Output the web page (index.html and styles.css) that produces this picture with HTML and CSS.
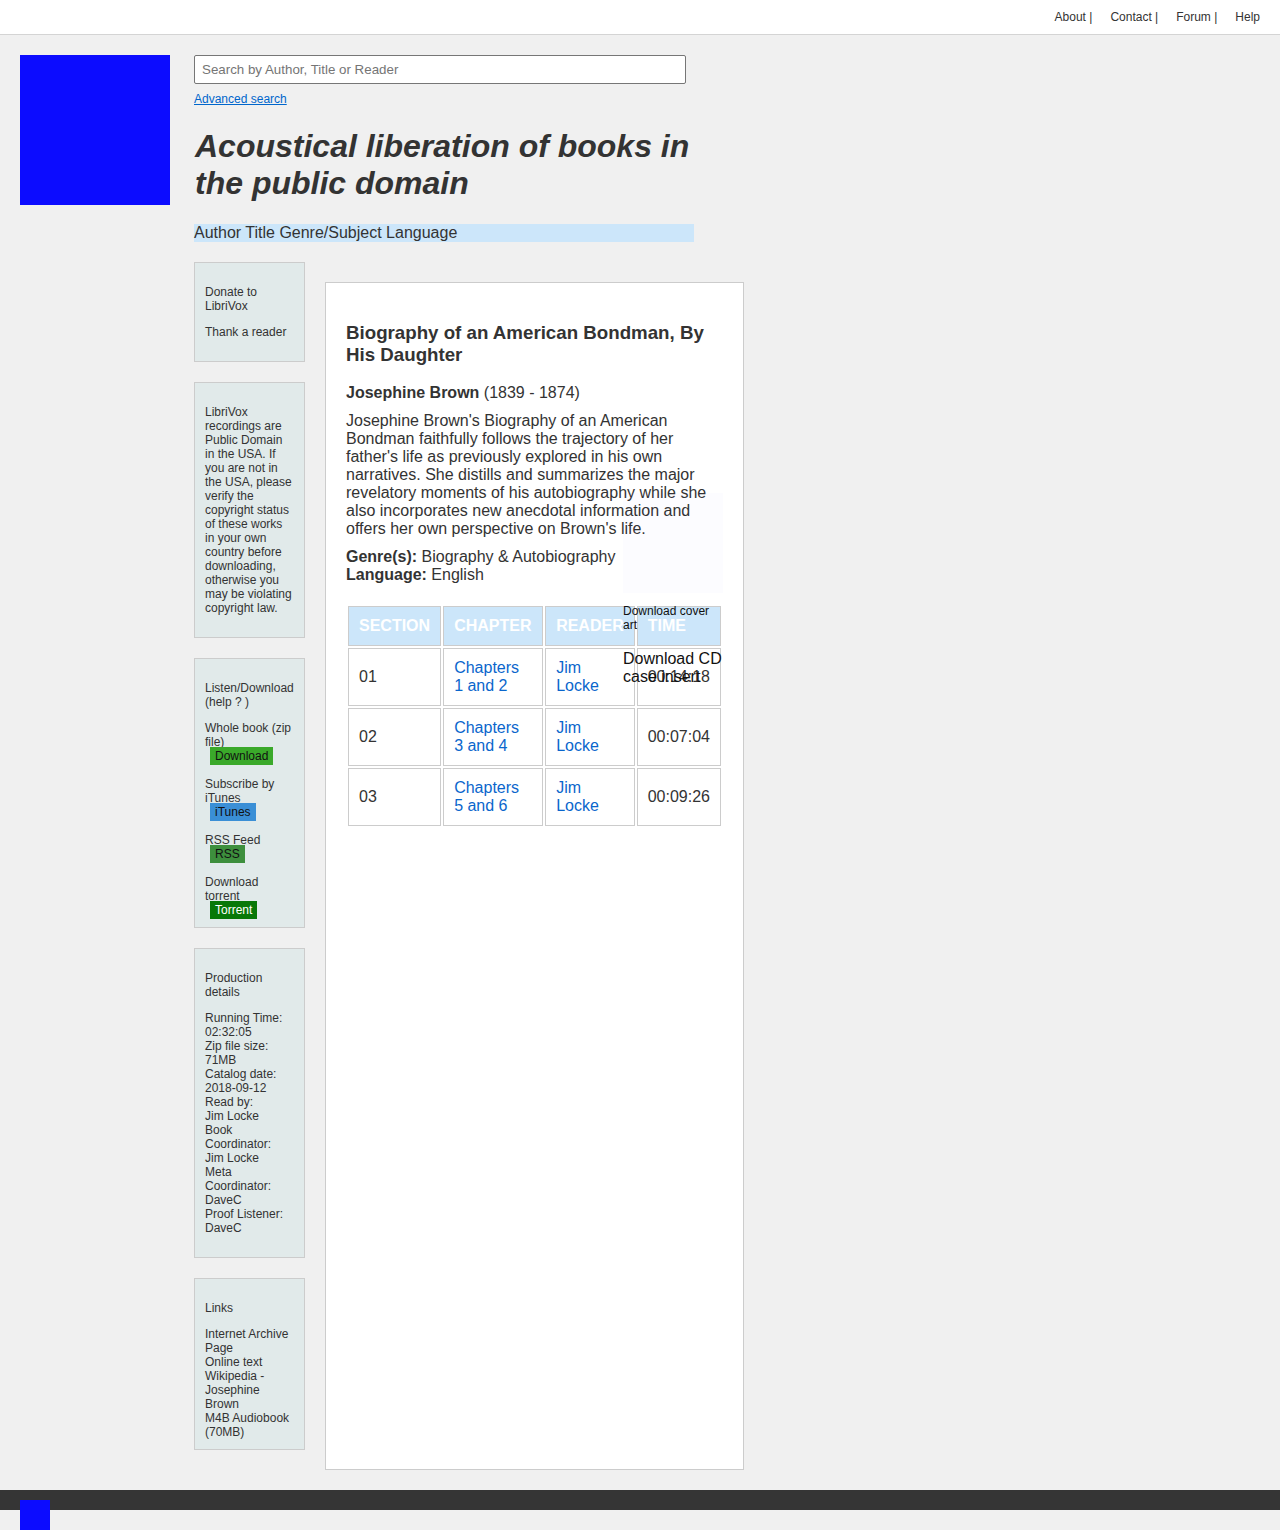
FILE: index.html
```html
<!DOCTYPE html>
<html lang="en">
<head>
<meta charset="utf-8">
<title>Biography of an American Bondman, By His Daughter - LibriVox</title>
<link rel="stylesheet" href="styles.css">
</head>
<body>
<header class="topbar">
  <nav class="toplinks">
    <a href="#">About |</a>
    <a href="#">Contact |</a>
    <a href="#">Forum |</a>
    <a href="#">Help</a>
  </nav>
</header>

<div class="page">
  <div class="logo"></div>
  <div class="main-col">
    <input class="search" type="text" placeholder="Search by Author, Title or Reader">
    <a class="adv-link" href="#">Advanced search</a>
    <h1 class="tagline">Acoustical liberation of books in the public domain</h1>
    <div class="browse">Author Title Genre/Subject Language</div>

    <div class="content-row">
      <aside class="sidebar">
        <div class="side-box">
          <p>Donate to LibriVox</p>
          <p>Thank a reader</p>
        </div>
        <div class="side-box">
          <p>LibriVox recordings are Public Domain in the USA. If you are not in the USA, please verify the copyright status of these works in your own country before downloading, otherwise you may be violating copyright law.</p>
        </div>
        <div class="side-box">
          <p>Listen/Download<br>(help ? )</p>
          <div class="dl-item">Whole book (zip file)<br><span class="btn btn-download">Download</span></div>
          <div class="dl-item">Subscribe by iTunes<br><span class="btn btn-itunes">iTunes</span></div>
          <div class="dl-item">RSS Feed<br><span class="btn btn-rss">RSS</span></div>
          <div class="dl-item">Download torrent<br><span class="btn btn-torrent">Torrent</span></div>
        </div>
        <div class="side-box">
          <p>Production details</p>
          <p>Running Time:<br>02:32:05<br>Zip file size:<br>71MB<br>Catalog date:<br>2018-09-12<br>Read by:<br>Jim Locke<br>Book Coordinator:<br>Jim Locke<br>Meta Coordinator:<br>DaveC<br>Proof Listener:<br>DaveC</p>
        </div>
        <div class="side-box">
          <p>Links</p>
          <ul class="link-list">
            <li>Internet Archive Page</li>
            <li>Online text</li>
            <li>Wikipedia - Josephine Brown</li>
            <li>M4B Audiobook (70MB)</li>
          </ul>
        </div>
      </aside>

      <main class="book">
        <div class="cover-block">
          <div class="cover-img"></div>
          <div class="cover-link">Download cover art</div>
          <div class="cd-link">Download CD case insert</div>
        </div>
        <h2 class="book-title">Biography of an American Bondman, By His Daughter</h2>
        <p class="author"><b>Josephine Brown</b> (1839 - 1874)</p>
        <p class="desc">Josephine Brown's Biography of an American Bondman faithfully follows the trajectory of her father's life as previously explored in his own narratives. She distills and summarizes the major revelatory moments of his autobiography while she also incorporates new anecdotal information and offers her own perspective on Brown's life.</p>
        <p class="meta"><b>Genre(s):</b> Biography &amp; Autobiography<br><b>Language:</b> English</p>

        <table class="chapters">
          <thead>
            <tr>
              <th class="c-sec">Section</th>
              <th class="c-chap">Chapter</th>
              <th class="c-read">Reader</th>
              <th class="c-time">Time</th>
            </tr>
          </thead>
          <tbody>
            <tr>
              <td>01</td>
              <td><a href="#">Chapters 1 and 2</a></td>
              <td><a href="#">Jim Locke</a></td>
              <td>00:14:18</td>
            </tr>
            <tr>
              <td>02</td>
              <td><a href="#">Chapters 3 and 4</a></td>
              <td><a href="#">Jim Locke</a></td>
              <td>00:07:04</td>
            </tr>
            <tr>
              <td>03</td>
              <td><a href="#">Chapters 5 and 6</a></td>
              <td><a href="#">Jim Locke</a></td>
              <td>00:09:26</td>
            </tr>
          </tbody>
        </table>
      </main>
    </div>
  </div>
</div>

<footer class="footer">
  <div class="footer-band"></div>
  <div class="footer-logo"></div>
</footer>
</body>
</html>
```

FILE: styles.css
```css
html, body {
  margin: 0;
  padding: 0;
}

body {
  background: #f0f0f0;
  font-family: "Liberation Sans", Arial, sans-serif;
  color: #333;
}

a {
  color: inherit;
  text-decoration: none;
}

/* top bar */
.topbar {
  background: #fff;
  height: 34px;
  border-bottom: 1px solid #d4d4d4;
  display: flex;
  justify-content: flex-end;
  align-items: center;
}

.toplinks {
  display: flex;
  gap: 18px;
  padding-right: 20px;
  font-size: 12px;
}

.toplinks a {
  color: #333;
}

/* page layout */
.page {
  display: flex;
  align-items: flex-start;
  padding: 20px 0 0 20px;
  gap: 24px;
}

.logo {
  width: 150px;
  height: 150px;
  background: #0c0cff;
  flex: none;
}

.main-col {
  flex: none;
}

.search {
  display: block;
  box-sizing: border-box;
  width: 492px;
  height: 29px;
  margin: 0;
  padding: 0 7px;
  border: 1px solid #767676;
  border-radius: 2px;
  background: #fff;
  font-family: "Liberation Sans", Arial, sans-serif;
  font-size: 13.33px;
  color: #333;
}

.search::placeholder {
  color: #757575;
}

.adv-link {
  display: inline-block;
  margin-top: 8px;
  font-size: 12px;
  color: #0066cc;
  text-decoration: underline;
}

.tagline {
  width: 500px;
  margin: 21px 0 22px;
  padding-left: 1px;
  box-sizing: border-box;
  font-size: 32px;
  font-weight: bold;
  font-style: italic;
  color: #333;
}

.browse {
  width: 500px;
  background: #cce6fa;
  font-size: 16px;
  line-height: 18px;
  color: #333;
  margin-bottom: 20px;
}

.content-row {
  display: flex;
  align-items: stretch;
  gap: 20px;
}

/* sidebar */
.sidebar {
  width: 111px;
  flex: none;
}

.side-box {
  box-sizing: border-box;
  width: 111px;
  background: #e1eaea;
  border: 1px solid #cccccc;
  padding: 10px;
  margin-bottom: 20px;
  font-size: 12px;
  line-height: 14px;
  color: #333;
}

.side-box p {
  margin: 12px 0;
}

.dl-item + .dl-item {
  margin-top: 14px;
}

.btn {
  margin-left: 5px;
  padding: 2px 5px;
  color: #111;
}

.btn-download { background: #3aa92a; }
.btn-itunes { background: #3a8fd6; }
.btn-rss { background: #3d8f3d; }
.btn-torrent { background: #087808; color: #fff; }

.link-list {
  list-style: none;
  margin: 0;
  padding: 0;
}

/* main book panel */
.book {
  position: relative;
  flex: none;
  box-sizing: border-box;
  width: 419px;
  margin-top: 20px;
  padding: 20px;
  background: #fff;
  border: 1px solid #cccccc;
}

.book-title {
  margin: 19px 0 18px;
  font-size: 18.72px;
  line-height: 22px;
  font-weight: bold;
  color: #333;
}

.author,
.desc,
.meta {
  font-size: 16px;
  line-height: 18px;
  margin: 0 0 10px;
}

.meta {
  margin-bottom: 20px;
}

.cover-block {
  position: absolute;
  top: 210px;
  right: 20px;
  width: 100px;
  color: #111;
  pointer-events: none;
}

/* broken cover image: a faint translucent square that lets the text show through */
.cover-img {
  width: 100px;
  height: 100px;
  background: rgba(40, 40, 255, 0.015);
}

.cover-link {
  margin-top: 11px;
  font-size: 12px;
  line-height: 14px;
}

.cd-link {
  margin-top: 18px;
  font-size: 16px;
  line-height: 18px;
}

.chapters {
  width: 100%;
  border-collapse: separate;
  border-spacing: 2px;
  font-size: 16px;
  line-height: 18px;
}

.chapters th,
.chapters td {
  border: 1px solid #cccccc;
  padding: 10px;
  text-align: left;
  vertical-align: middle;
}

.chapters th {
  background: #cce6fa;
  color: #fff;
  font-weight: bold;
  text-transform: uppercase;
}

.chapters td {
  color: #333;
}

.chapters td a {
  color: #0a66cc;
}

.c-sec { width: 71px; }
.c-chap { width: 78px; }
.c-read { width: 67px; }
.c-time { width: 62px; }

/* footer */
.footer {
  margin-top: 20px;
}

.footer-band {
  height: 20px;
  background: #353535;
}

.footer-logo {
  width: 30px;
  height: 30px;
  margin: -10px 0 0 20px;
  background: #0c0cff;
}
```
